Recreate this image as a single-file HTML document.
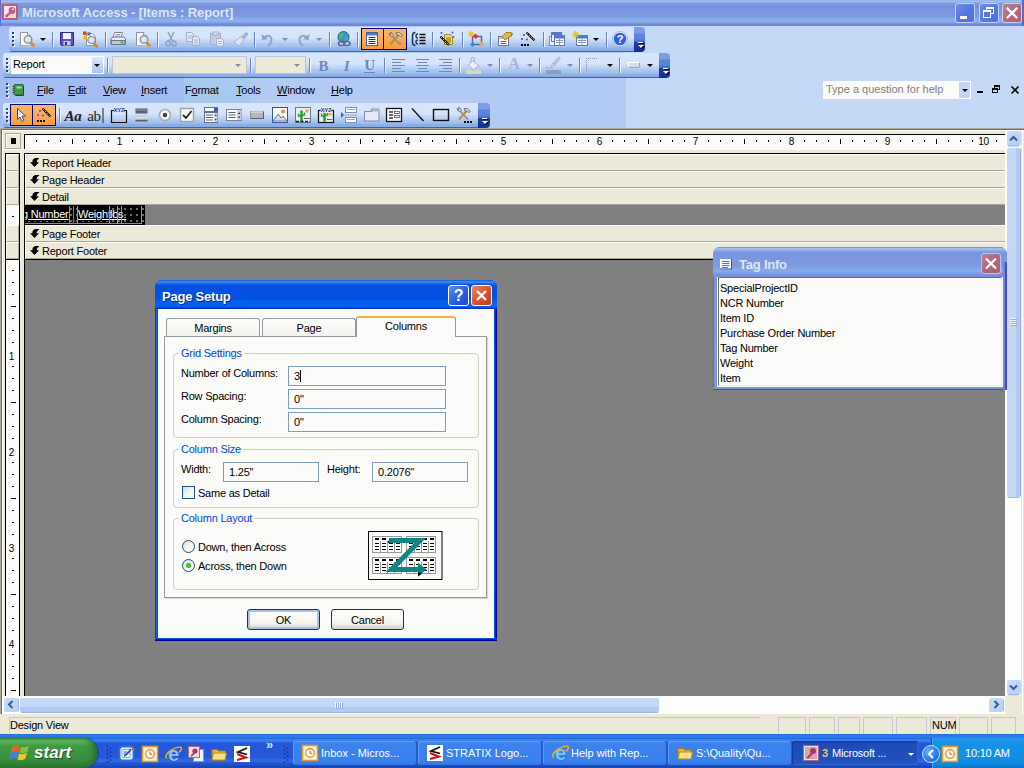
<!DOCTYPE html>
<html><head><meta charset="utf-8"><title>Microsoft Access - [Items : Report]</title>
<style>
*{box-sizing:border-box;margin:0;padding:0}
html,body{width:1024px;height:768px;overflow:hidden;background:#808080}
body{position:relative;font-family:"Liberation Sans",sans-serif;font-size:11px;color:#000;line-height:1;letter-spacing:-0.22px}
.a{position:absolute}
.t{position:absolute;white-space:nowrap;line-height:13px;height:13px}
svg{position:absolute;overflow:visible}
#title{left:0;top:0;width:1024px;height:26px;background:linear-gradient(#8caee8 0,#a4bef3 1.5px,#8daee8 2.5px,#7b9be3 3.5px,#7a98e1 5px,#7792dc 6.5px,#7792dc 8px,#7a98e1 9.5px,#7a98e1 15px,#7ba0e6 17px,#8cb0e9 19.5px,#8cb0e9 21.5px,#7b9ae2 23px,#7088d8 24.5px,#7088d8 26px)}
#title .cap{left:22px;top:4px;font:bold 13px "Liberation Sans",sans-serif;color:#dfe6f9;line-height:18px;height:18px;letter-spacing:-0.1px}
.wb{position:absolute;top:3px;width:20px;height:20px;border:1px solid #c4d2f4;border-radius:3px}
#dock{left:0;top:26px;width:1024px;height:102px;background:linear-gradient(90deg,#a3bcf2 0,#a3bcf2 184px,#a6c9ee 184px,#a6c9ee 250px,#b3cbf3 250px,#b3cbf3 626px,#c4d8f8 626px)}
.tb{position:absolute;height:25px;border-radius:3px 0 0 3px;background:linear-gradient(#d6e6fc 0,#d4e4fb 11px,#c4d8f6 13px,#c0d5f5 15px,#b4ccf2 16px,#a6c6ed 18px,#a0c2ec 20px,#8cb0e7 21px,#89ace5 23.500px,#3f62a0 24px,#3f62a0 25px)}
.cap2{position:absolute;width:11px;height:25px;border-radius:0 4px 4px 0;background:linear-gradient(#7a9ee4 0,#7a9ee4 6px,#5a84da 7px,#5a84da 12px,#4a74d0 13px,#4a74d0 14.500px,#1f40a0 15.500px,#12308c 25px)}
.sep{position:absolute;width:2px;height:15px;border-left:1px solid #6a7fcf;border-right:1px solid #f1f6fe}
.grip{position:absolute;width:2px;height:15px;margin:1px 0 0 1px;background:repeating-linear-gradient(#fff 0,#fff 2px,transparent 2px,transparent 4px)}
.grip::after{content:"";position:absolute;left:-1px;top:-1px;width:2px;height:15px;background:repeating-linear-gradient(#27408b 0,#27408b 2px,transparent 2px,transparent 4px)}
.act{position:absolute;height:22px;background:linear-gradient(#fbb865,#fdab57 50%,#f89b42);border:1px solid #000080}
.arr{position:absolute;width:0;height:0;border-left:3px solid transparent;border-right:3px solid transparent;border-top:3px solid #000}
.arr.g{border-top-color:#7c8eae}

.dlg{position:absolute;background:#fbfbf9}
.inp{position:absolute;height:20px;background:#fbfbf9;border:1px solid #7f9db9}
.inp .t{left:5px;top:3px}
.gb{position:absolute;border:1px solid #d0d0bf;border-radius:4px}
.gl{position:absolute;white-space:nowrap;line-height:13px;height:13px;color:#0046d5;background:#fbfbf9;padding:0 2px}
.btn{position:absolute;width:73px;height:21px;border:1px solid #003c74;border-radius:3px;background:linear-gradient(#fff,#f4f3ee 70%,#d6d0c5);text-align:center;line-height:21px}
.tab{position:absolute;height:18px;border:1px solid #919b9c;border-bottom:0;border-radius:3px 3px 0 0;background:linear-gradient(#fdfdfc,#f4f3ee);text-align:center;line-height:18px}
</style></head>
<body>
<div id="title" class="a"><div class="t cap">Microsoft Access - [Items : Report]</div></div>
<svg style="left:2px;top:4px" width="16" height="16"><rect x="1" y="1" width="14" height="14" fill="#f6e8ee" stroke="#b85c7c" stroke-width="2"/><path d="M2 14L14 7V14z" fill="#ecdcd0" opacity=".7"/><circle cx="10" cy="6.500" r="3.400" fill="#c4588a"/><circle cx="11" cy="5.200" r="1" fill="#f6e0ea"/><path d="M8 7.500L3 11.500l.8 2 2-.5.500-1.500 1.500-.3.700-1.500 1.500-.5z" fill="#c4588a"/></svg>
<div class="a" style="left:0;top:0;width:1px;height:26px;background:#5a6cd0"></div>
<div class="wb" style="left:955px;background:linear-gradient(135deg,#6f8fe6,#5578e0 50%,#5071dc)"><div class="a" style="left:4px;top:12px;width:7px;height:3px;background:#fff"></div></div>
<div class="wb" style="left:979px;background:linear-gradient(135deg,#6f8fe6,#5578e0 50%,#5071dc)"><div class="a" style="left:6px;top:3px;width:8px;height:7px;border:1px solid #fff;border-top-width:2px"></div><div class="a" style="left:3px;top:6px;width:8px;height:8px;border:1px solid #fff;border-top-width:2px;background:#5578e0"></div></div>
<div class="wb" style="left:1002px;background:linear-gradient(135deg,#c08090,#b46878 50%,#ac6274)"><svg style="left:0;top:0" width="18" height="18"><path d="M3.800 3.800L14.200 14.200M14.200 3.800L3.800 14.200" stroke="#fff" stroke-width="2.300" fill="none"/></svg></div>
<div class="a" style="left:1022px;top:0;width:2px;height:26px;background:#5a68c8"></div>
<div id="dock" class="a"></div>
<div class="tb" style="left:9px;top:27px;width:625px"></div><div class="cap2" style="left:634px;top:27px"></div>
<div class="grip" style="left:12px;top:32px"></div>
<div class="sep" style="left:52px;top:32px"></div>
<div class="sep" style="left:105px;top:32px"></div>
<div class="sep" style="left:157px;top:32px"></div>
<div class="sep" style="left:254px;top:32px"></div>
<div class="sep" style="left:329px;top:32px"></div>
<div class="sep" style="left:357px;top:32px"></div>
<div class="sep" style="left:432px;top:32px"></div>
<div class="sep" style="left:462px;top:32px"></div>
<div class="sep" style="left:490px;top:32px"></div>
<div class="sep" style="left:543px;top:32px"></div>
<div class="sep" style="left:606px;top:32px"></div>
<div class="act" style="left:361px;top:28px;width:23px"></div><div class="act" style="left:383px;top:28px;width:24px"></div>
<div class="arr" style="left:40px;top:38px"></div>
<div class="arr g" style="left:282px;top:38px"></div>
<div class="arr g" style="left:316px;top:38px"></div>
<div class="arr" style="left:593px;top:38px"></div>
<svg style="left:19px;top:31px" width="16" height="16"><path d="M1.500 1.500h7l3 3v10h-10z" fill="#fdfdfd" stroke="#8a92a6"/><path d="M8.500 1.500v3h3" fill="#e6eaf2" stroke="#8a92a6"/><path d="M2 15h10v-10" stroke="#c4cad8" fill="none"/><path d="M11.500 11.500l3 3" stroke="#e08a1e" stroke-width="2.800" stroke-linecap="round"/><circle cx="9" cy="8.500" r="3.800" fill="#dbe8f8" stroke="#8f98aa" stroke-width="1.500"/></svg><svg style="left:59px;top:31px" width="16" height="16"><path d="M1.500 1.500h13v13h-12l-1-1z" fill="#5a52c8" stroke="#2f2a8a"/><rect x="4" y="2" width="8" height="6" fill="#f4f4fb"/><rect x="4.500" y="10" width="7" height="4.500" fill="#c9cbe4"/><rect x="6" y="11" width="2" height="3" fill="#2f2a8a"/></svg><svg style="left:82px;top:31px" width="16" height="16"><path d="M4.500 2.500h6l3 3v9h-9z" fill="#fdfdfd" stroke="#8a92a6"/><rect x="1" y="0.500" width="3.500" height="3.500" fill="#e23a2a"/><rect x="5.500" y="1.500" width="3" height="3" fill="#2f6fe0"/><rect x="1.500" y="5" width="3.500" height="3.500" fill="#f2b21e"/><path d="M12 12.500l3 3" stroke="#e08a1e" stroke-width="2.600" stroke-linecap="round"/><circle cx="9.500" cy="9" r="3.600" fill="#dbe8f8" stroke="#8f98aa" stroke-width="1.500"/></svg><svg style="left:110px;top:31px" width="16" height="16"><path d="M4.500 1.500h8l-1.500 5h-8z" fill="#fff" stroke="#7d8696"/><path d="M5.500 3.500h5M5 5h5" stroke="#9aa2b4"/><path d="M1 7.500l2-1.500h11l1.500 1.500v5.500h-14.500z" fill="#e9ebf0" stroke="#6d7686"/><rect x="1.500" y="9.500" width="13.500" height="4" fill="#c2c7d2" stroke="#6d7686"/><rect x="10.500" y="10.500" width="3" height="2" fill="#2fc23a"/></svg><svg style="left:134.5px;top:31px" width="16" height="16"><path d="M1.500 1.500h7l3 3v10h-10z" fill="#fdfdfd" stroke="#8a92a6"/><path d="M8.500 1.500v3h3" fill="#e6eaf2" stroke="#8a92a6"/><path d="M2 15h10v-10" stroke="#c4cad8" fill="none"/><path d="M11.500 11.500l3 3" stroke="#e08a1e" stroke-width="2.800" stroke-linecap="round"/><circle cx="9" cy="8.500" r="3.800" fill="#dbe8f8" stroke="#8f98aa" stroke-width="1.500"/></svg><svg style="left:162.5px;top:31px" width="16" height="16"><path d="M5 1l4.500 9M11 1L6.500 10" stroke="#8fa3c6" stroke-width="1.500" fill="none"/><ellipse cx="5" cy="12.500" rx="2" ry="2.500" fill="none" stroke="#8fa3c6" stroke-width="1.500"/><ellipse cx="11" cy="12.500" rx="2" ry="2.500" fill="none" stroke="#8fa3c6" stroke-width="1.500"/></svg><svg style="left:185px;top:31px" width="16" height="16"><path d="M1.500 1.500h5l2 2v7h-7z" fill="#e6e9f1" stroke="#9fb0cf"/><path d="M3 5h4M3 7h4" stroke="#a9b5cd"/><path d="M7.500 5.500h5l2 2v7h-7z" fill="#e6e9f1" stroke="#9fb0cf"/><path d="M9 9h4M9 11h4M9 13h4" stroke="#a9b5cd"/></svg><svg style="left:208.5px;top:31px" width="16" height="16"><rect x="1.500" y="2.500" width="10" height="11" fill="#c7cde0" stroke="#9fb0cf"/><rect x="4" y="1" width="5" height="3" fill="#dfe3ee" stroke="#9fb0cf"/><path d="M7.500 7.500h5l2 2v5.500h-7z" fill="#eceef4" stroke="#9fb0cf"/><path d="M9 10.500h4M9 12.500h4" stroke="#a9b5cd"/></svg><svg style="left:233px;top:31px" width="16" height="16"><path d="M13.500 1.500l1.500 1.500-4.500 5-2-2z" fill="#a9b7d2" stroke="#93a5c6"/><path d="M8 5.500l3 3-5 6.500-5-3.500z" fill="#dfe4ef" stroke="#a4b3d0"/></svg><svg style="left:260px;top:31px" width="16" height="16"><path d="M3 7.500q5-5 8-1 2 4-3 8.500" stroke="#8fa3c6" stroke-width="2" fill="none"/><path d="M1.500 3l1 6.500 5.500-2z" fill="#8fa3c6"/></svg><svg style="left:294.5px;top:31px" width="16" height="16"><path d="M13 7.500q-5-5-8-1-2 4 3 8.500" stroke="#8fa3c6" stroke-width="2" fill="none"/><path d="M14.500 3l-1 6.500-5.500-2z" fill="#8fa3c6"/></svg><svg style="left:335.5px;top:31px" width="16" height="16"><circle cx="7.500" cy="6" r="5.500" fill="#3f8ee0" stroke="#2a5fa8"/><path d="M3.500 3.500q2-2.500 4-1.500 1 2-1 3.500t-1 3.500q-2-1-2.500-3z" fill="#4fc23f"/><path d="M9.500 5.500q2.500 0 2.500 2.500-1 2-2.500 1.500z" fill="#4fc23f"/><rect x="2.500" y="10.500" width="6" height="4" rx="2" fill="none" stroke="#59688a" stroke-width="1.600"/><rect x="8" y="10.500" width="6" height="4" rx="2" fill="none" stroke="#59688a" stroke-width="1.600"/></svg><svg style="left:364px;top:31px" width="16" height="16"><rect x="2.500" y="1.500" width="11" height="13" fill="#fff" stroke="#4a5f96"/><rect x="3" y="2" width="10" height="2.500" fill="#4a79d8"/><path d="M4.500 6.500h7M4.500 8.500h7M4.500 10.500h7M4.500 12.500h7" stroke="#333"/></svg><svg style="left:387px;top:31px" width="16" height="16"><path d="M3 13.500L12 3.500" stroke="#c78a2a" stroke-width="2"/><path d="M9 1.500q4-1 6.500 3l-2 1q-1.500-2-3.500-1.500z" fill="#d9dde6" stroke="#59606e" stroke-width=".8"/><path d="M13 13.500L5.500 5.500" stroke="#8a92a0" stroke-width="1.800"/><path d="M2 2.500q1 3 3 3.500l1.500-1.500q-.5-2-3-3.500l.5 2-1 1z" fill="#cfd4de" stroke="#59606e" stroke-width=".8"/><path d="M12 11.500l2 2" stroke="#c78a2a" stroke-width="2.400"/></svg><svg style="left:410.5px;top:31px" width="16" height="16"><path d="M4.500 1.500q-3 0-3 3v7q0 3 3 3" stroke="#22366e" stroke-width="1.600" fill="none"/><path d="M7 3q-2 0-2 2t2 2M7 9q-2 0-2 2t2 2" stroke="#22366e" stroke-width="1.400" fill="none"/><path d="M8.500 3.500h6M8.500 6.500h6M8.500 9.500h6M8.500 12.500h6" stroke="#111" stroke-width="1.400"/></svg><svg style="left:439px;top:31px" width="16" height="16"><path d="M5.500 3.500h6l2 2v8h-8z" fill="#f6d868" stroke="#a88a2a"/><path d="M7 7h5M7 9h5M7 11h5" stroke="#8a6f1e"/><path d="M1.500 5.500L10 14" stroke="#111" stroke-width="2.200"/><path d="M2 6l7.500 7.500" stroke="#e8c13a" stroke-width="1" stroke-dasharray="1.500 1.500"/><circle cx="2.500" cy="2" r="1" fill="#4a4ad0"/><circle cx="13.500" cy="1.500" r="1" fill="#4a4ad0"/><circle cx="14.500" cy="6" r=".9" fill="#4a4ad0"/></svg><svg style="left:468px;top:31px" width="16" height="16"><rect x="4.500" y="5.500" width="9" height="8" fill="none" stroke="#59688a" stroke-width="1.400"/><path d="M7 2.500l3.500 2.500-2.500 3-3-2.500z" fill="#e23a2a"/><path d="M4.500 11l2.500 2.500-2.500 2.500-2.500-2.500z" fill="#3f7fe0"/><path d="M13.500 10.500l2.500 2.500-2.500 2.500-2.500-2.500z" fill="#f2b21e"/><path d="M3 0v6M0 3h6M1 1l4 4M5 1L1 5" stroke="#f2c21e" stroke-width="1.100"/></svg><svg style="left:496.5px;top:31px" width="16" height="16"><rect x="1.500" y="5.500" width="10" height="9" fill="#fff" stroke="#6d7686"/><rect x="2" y="6" width="9" height="2" fill="#b9c4dc"/><path d="M3.500 10.500h6M3.500 12.500h6" stroke="#59606e"/><path d="M5 6l4-4.500 5 0 1 3-4 2.500-3 2z" fill="#e8b93a" stroke="#8a6a18" stroke-width=".8"/><path d="M14.500 1.500l1.500 1-1.500 3z" fill="#2f9a3a"/></svg><svg style="left:520px;top:31px" width="16" height="16"><path d="M6.500 1.500L14.500 9.500" stroke="#111" stroke-width="2.200"/><path d="M7 2l7.500 7.500" stroke="#e8c13a" stroke-width="1" stroke-dasharray="1.500 1.500"/><circle cx="4" cy="4" r="1" fill="#4a4ad0"/><circle cx="2" cy="8" r="1" fill="#4a4ad0"/><circle cx="7" cy="8.500" r="1" fill="#4a4ad0"/><rect x="1" y="13" width="2" height="2" fill="#000"/><rect x="4" y="13" width="2" height="2" fill="#000"/><rect x="7" y="13" width="2" height="2" fill="#000"/></svg><svg style="left:549px;top:31px" width="16" height="16"><rect x="0.500" y="5.500" width="9" height="9" fill="#eef1f8" stroke="#7d8cb0"/><rect x="2.500" y="1.500" width="10" height="9" fill="#eef1f8" stroke="#5f78b8"/><rect x="3" y="2" width="9" height="2" fill="#4a79d8"/><rect x="5.500" y="4.500" width="10" height="10" fill="#fff" stroke="#5f78b8"/><rect x="6" y="5" width="9" height="2.500" fill="#4a79d8"/><path d="M7 9.500h7M7 11.500h7M10.500 8v6" stroke="#8f9ab4"/></svg><svg style="left:572px;top:31px" width="16" height="16"><rect x="4.500" y="4.500" width="11" height="10" fill="#fff" stroke="#5f78b8"/><rect x="5" y="5" width="10" height="2.500" fill="#4a79d8"/><path d="M6 9.500h8M6 11.500h8M10 8v6" stroke="#8f9ab4"/><path d="M3.500 0v7M0 3.500h7M1 1l5 5M6 1L1 6" stroke="#f2c21e" stroke-width="1.200"/></svg><svg style="left:612px;top:31px" width="16" height="16"><circle cx="8" cy="8" r="7" fill="#2f63d8" stroke="#e6eefc" stroke-width="1.300"/><circle cx="8" cy="8" r="7.600" fill="none" stroke="#7f9fdf" stroke-width=".6"/><text x="8" y="12" text-anchor="middle" font-family="Liberation Sans,sans-serif" font-weight="bold" font-size="11" fill="#fff">?</text></svg>
<div class="tb" style="left:3px;top:53px;width:656px"></div><div class="cap2" style="left:659px;top:53px"></div>
<div class="grip" style="left:6px;top:58px"></div>
<div class="sep" style="left:107px;top:58px"></div>
<div class="sep" style="left:250px;top:58px"></div>
<div class="sep" style="left:309px;top:58px"></div>
<div class="sep" style="left:384px;top:58px"></div>
<div class="sep" style="left:459px;top:58px"></div>
<div class="sep" style="left:499px;top:58px"></div>
<div class="sep" style="left:539px;top:58px"></div>
<div class="sep" style="left:579px;top:58px"></div>
<div class="sep" style="left:619px;top:58px"></div>
<div class="a" style="left:11px;top:56px;width:93px;height:18px;background:#fbfbf9"><div class="t" style="left:2px;top:2px">Report</div><div class="a" style="left:81px;top:1px;width:11px;height:16px;background:linear-gradient(#dbe9fd,#a9c5f1)"></div><div class="arr" style="left:83px;top:8px"></div></div>
<div class="a" style="left:112px;top:56px;width:135px;height:18px;background:#ece9d8;border:1px solid #b8c6d8"><div class="arr g" style="left:122px;top:7px"></div></div>
<div class="a" style="left:255px;top:56px;width:51px;height:18px;background:#ece9d8;border:1px solid #b8c6d8"><div class="arr g" style="left:38px;top:7px"></div></div>
<div class="arr g" style="left:487px;top:64px"></div>
<div class="arr g" style="left:527px;top:64px"></div>
<div class="arr g" style="left:567px;top:64px"></div>
<div class="arr" style="left:607px;top:64px"></div>
<div class="arr" style="left:647px;top:64px"></div>
<svg style="left:315px;top:57px" width="17" height="17"><text x="8.5" y="14" text-anchor="middle" font-family="Liberation Serif,serif" font-size="15" fill="#6f86bd" font-weight="bold">B</text></svg><svg style="left:338px;top:57px" width="17" height="17"><text x="8.5" y="14" text-anchor="middle" font-family="Liberation Serif,serif" font-size="15" fill="#6f86bd" font-weight="bold" font-style="italic">I</text></svg><svg style="left:361px;top:57px" width="17" height="17"><text x="8.5" y="13" text-anchor="middle" font-family="Liberation Serif,serif" font-size="15" fill="#6f86bd" font-weight="bold">U</text><rect x="3" y="15" width="11" height="1" fill="#6f86bd"/></svg><svg style="left:391.5px;top:58px" width="13" height="14"><rect x="0" y="1" width="13" height="1" fill="#6f86bd"/><rect x="0" y="4" width="9" height="1" fill="#6f86bd"/><rect x="0" y="7" width="13" height="1" fill="#6f86bd"/><rect x="0" y="10" width="9" height="1" fill="#6f86bd"/><rect x="0" y="13" width="13" height="1" fill="#6f86bd"/></svg><svg style="left:415.5px;top:58px" width="13" height="14"><rect x="0" y="1" width="13" height="1" fill="#6f86bd"/><rect x="2" y="4" width="9" height="1" fill="#6f86bd"/><rect x="0" y="7" width="13" height="1" fill="#6f86bd"/><rect x="2" y="10" width="9" height="1" fill="#6f86bd"/><rect x="0" y="13" width="13" height="1" fill="#6f86bd"/></svg><svg style="left:438.5px;top:58px" width="13" height="14"><rect x="0" y="1" width="13" height="1" fill="#6f86bd"/><rect x="4" y="4" width="9" height="1" fill="#6f86bd"/><rect x="0" y="7" width="13" height="1" fill="#6f86bd"/><rect x="4" y="10" width="9" height="1" fill="#6f86bd"/><rect x="0" y="13" width="13" height="1" fill="#6f86bd"/></svg><svg style="left:466px;top:56px" width="17" height="19"><rect x="0" y="14" width="15" height="4" fill="#d6dcc4"/><path d="M6.500 4.500l6 5-5 4.500-5-5z" fill="#eef1f7" stroke="#9fb0cf"/><path d="M5 6.500v-4q2-2.500 3.500 0v3" fill="none" stroke="#9fb0cf"/><path d="M12.500 9.500q2 1 1.500 4-1.500-1-1.500-4z" fill="#b9c6df"/></svg><svg style="left:506px;top:56px" width="16" height="19"><text x="8" y="13" text-anchor="middle" font-family="Liberation Serif,serif" font-weight="bold" font-size="16" fill="#a3b4d6">A</text></svg><svg style="left:546px;top:56px" width="17" height="19"><rect x="0" y="14" width="15" height="4" fill="#8aa0bc"/><path d="M13 1l1.500 1.500-5 6-2-2z" fill="#b9c6df" stroke="#9fb0cf" stroke-width=".8"/><path d="M7 7l2 2q-2 3-6 3.500 2.500-2 4-5.500z" fill="#c9d3e6" stroke="#9fb0cf" stroke-width=".8"/><rect x="0" y="11" width="2" height="1" fill="#8fa3c6"/></svg><svg style="left:586px;top:58px" width="14" height="13"><path d="M0.500 13V0.500H12" stroke="#7d93c4" stroke-width="1" stroke-dasharray="1 1" fill="none"/></svg><svg style="left:628px;top:62px" width="12" height="6"><rect x="0.500" y="0.500" width="11" height="5" fill="#d9dbe0" stroke="#fff"/><path d="M0.500 5.500h11v-5" stroke="#9aa3b6" fill="none"/></svg>
<div class="grip" style="left:6px;top:83px"></div>
<svg style="left:12px;top:84px" width="12" height="12"><rect x="2" y="0.500" width="9.500" height="10.500" rx="1" fill="#3f9a45" stroke="#2a6a30"/><path d="M11.500 2v9.500h-8" stroke="#1f4a22" fill="none"/><rect x="4.500" y="2.500" width="5" height="2" fill="#a8dba8"/><path d="M0.500 2.500h2M0.500 4.500h2M0.500 6.500h2M0.500 8.500h2" stroke="#444"/></svg>
<div class="t" style="left:37px;top:84px"><u>F</u>ile</div>
<div class="t" style="left:68px;top:84px"><u>E</u>dit</div>
<div class="t" style="left:103px;top:84px"><u>V</u>iew</div>
<div class="t" style="left:141px;top:84px"><u>I</u>nsert</div>
<div class="t" style="left:185px;top:84px">F<u>o</u>rmat</div>
<div class="t" style="left:236px;top:84px"><u>T</u>ools</div>
<div class="t" style="left:277px;top:84px"><u>W</u>indow</div>
<div class="t" style="left:331px;top:84px"><u>H</u>elp</div>
<div class="a" style="left:823px;top:81px;width:148px;height:18px;background:#fbfbf9"><div class="t" style="left:3px;top:2px;color:#808080;letter-spacing:0">Type a question for help</div><div class="a" style="left:136px;top:1px;width:11px;height:16px;background:#c3d6f7"></div><div class="arr" style="left:139px;top:8px"></div></div>
<div class="a" style="left:977px;top:91px;width:6px;height:2px;background:#000"></div>
<div class="a" style="left:994px;top:85px;width:6px;height:5px;border:1px solid #000;border-top-width:2px"></div><div class="a" style="left:992px;top:88px;width:6px;height:5px;border:1px solid #000;border-top-width:2px;background:#c4d9f9"></div>
<svg style="left:1011px;top:86px" width="8" height="8"><path d="M0.5 0.5L7.5 7.5M7.5 0.5L0.5 7.5" stroke="#000" stroke-width="1.6"/></svg>
<div class="tb" style="left:3px;top:103px;width:475px"></div><div class="cap2" style="left:478px;top:103px;width:12px"></div>
<div class="grip" style="left:6px;top:108px"></div>
<div class="act" style="left:10px;top:104px;width:23px"></div><div class="act" style="left:32px;top:104px;width:24px"></div>
<div class="sep" style="left:59px;top:108px"></div>
<svg style="left:13px;top:107px" width="16" height="16"><path d="M4.500 1.500v11l2.500-2.500 2 4.500 2-1-2-4.500h3.500z" fill="#fff" stroke="#3a4a7a" stroke-width="1"/></svg><svg style="left:36px;top:107px" width="16" height="16"><path d="M6.500 1.500L14.500 9.500" stroke="#111" stroke-width="2.200"/><path d="M7 2l7.500 7.500" stroke="#e8c13a" stroke-width="1" stroke-dasharray="1.500 1.500"/><circle cx="4" cy="4" r="1" fill="#4a4ad0"/><circle cx="2" cy="8" r="1" fill="#4a4ad0"/><circle cx="7" cy="8.500" r="1" fill="#4a4ad0"/><rect x="1" y="13" width="2" height="2" fill="#000"/><rect x="4" y="13" width="2" height="2" fill="#000"/><rect x="7" y="13" width="2" height="2" fill="#000"/></svg><svg style="left:64px;top:107px" width="18" height="16"><text x="9" y="14" text-anchor="middle" font-family="Liberation Serif,serif" font-style="italic" font-weight="bold" font-size="15" fill="#222">Aa</text></svg><svg style="left:87px;top:107px" width="18" height="16"><text x="7" y="14" text-anchor="middle" font-family="Liberation Serif,serif" font-size="15" fill="#222">ab</text><rect x="15.500" y="1" width="1" height="15" fill="#222"/></svg><svg style="left:111px;top:107px" width="16" height="16"><path d="M3 3.500H0.500v12h15v-12H13" fill="none" stroke="#111" stroke-width="1.200"/><text x="8" y="5" text-anchor="middle" font-family="Liberation Sans,sans-serif" font-weight="bold" font-size="6" fill="#1f3c9a">XYZ</text></svg><svg style="left:134px;top:107px" width="16" height="16"><rect x="1.500" y="1.500" width="12" height="5" fill="#5a6170"/><rect x="1.500" y="2.500" width="12" height="1.500" fill="#7f8796"/><rect x="1.500" y="9.500" width="12" height="5" fill="#aab0bd"/><rect x="1.500" y="10" width="12" height="1.500" fill="#e6e9f0"/><rect x="1.500" y="13" width="12" height="1.500" fill="#5a6170"/></svg><svg style="left:157px;top:107px" width="16" height="16"><circle cx="8" cy="8" r="5.500" fill="#f6f7fa" stroke="#a7adba" stroke-width="1.600"/><circle cx="8" cy="8" r="2.200" fill="#3a4052"/></svg><svg style="left:179px;top:107px" width="16" height="16"><rect x="1.500" y="1.500" width="13" height="13" fill="#fbfbfb" stroke="#9aa1ae" stroke-width="1.400"/><path d="M4 8l3 3 5.500-7" stroke="#222" stroke-width="1.800" fill="none"/></svg><svg style="left:203px;top:107px" width="16" height="16"><rect x="1.500" y="0.500" width="13" height="4" fill="#fff" stroke="#5f6f95"/><rect x="11" y="1" width="3.500" height="3" fill="#3a5aa8"/><rect x="1.500" y="5.500" width="13" height="10" fill="#fff" stroke="#5f6f95"/><path d="M3 8h7M3 10.500h7M3 13h7" stroke="#59606e"/><rect x="11" y="6" width="3.500" height="9" fill="#c9d2e6"/><path d="M11.700 9l1 -1.500 1 1.500zM11.700 12l1 1.500 1-1.500z" fill="#222"/></svg><svg style="left:226px;top:107px" width="16" height="16"><rect x="0.500" y="2.500" width="15" height="11" fill="#fff" stroke="#7d8696"/><path d="M2.500 5.500h7M2.500 8h7M2.500 10.500h7" stroke="#59606e"/><rect x="11" y="3" width="4.500" height="10" fill="#c9d2e6"/><path d="M12 7l1.200-1.800 1.200 1.800zM12 9.500l1.200 1.800 1.200-1.800z" fill="#222"/></svg><svg style="left:249px;top:107px" width="16" height="16"><rect x="1.500" y="4.500" width="13" height="7" fill="#b3b6bd" stroke="#8a8e98"/><path d="M2 5h12" stroke="#e9ebef"/><path d="M2 11.500h12.500v-6.500" stroke="#5a5e68" fill="none"/></svg><svg style="left:272px;top:107px" width="16" height="16"><rect x="0.500" y="0.500" width="15" height="15" fill="#fff" stroke="#2f57a8"/><circle cx="11" cy="4.500" r="2" fill="#f08a2a"/><path d="M1 14l5-7 3 4 2-2 4 5z" fill="#cfd9ea" stroke="#4a5a7a" stroke-width=".8"/></svg><svg style="left:295px;top:107px" width="16" height="16"><rect x="0.500" y="0.500" width="15" height="15" fill="#e9edf5" stroke="#6d7686"/><path d="M6.500 14V4.500" stroke="#2a9436" stroke-width="2.400" stroke-linecap="round" fill="none"/><path d="M3.500 6.500v2.500h3M9.500 5.500v2.500h-3" stroke="#2a9436" stroke-width="1.300" fill="none"/><circle cx="12" cy="4" r="1.800" fill="#f2b21e"/><path d="M1 14.500h14" stroke="#222" stroke-width="1.500" stroke-dasharray="3 1.500"/><path d="M9 11.500h6" stroke="#59606e"/></svg><svg style="left:318px;top:107px" width="16" height="16"><rect x="0.500" y="3.500" width="15" height="12" fill="#e9edf5" stroke="#111" stroke-width="1.200"/><path d="M6.500 14V4.500" stroke="#2a9436" stroke-width="2.400" stroke-linecap="round" fill="none"/><path d="M3.500 6.500v2.500h3M9.500 5.500v2.500h-3" stroke="#2a9436" stroke-width="1.300" fill="none"/><circle cx="12" cy="7" r="1.800" fill="#f2b21e"/><text x="8" y="5" text-anchor="middle" font-family="Liberation Sans,sans-serif" font-weight="bold" font-size="6" fill="#1f3c9a" stroke="#eef2fb" stroke-width="1.500" paint-order="stroke">XYZ</text><path d="M9 12.500h5" stroke="#59606e"/></svg><svg style="left:341px;top:107px" width="16" height="16"><rect x="4.500" y="0.500" width="11" height="5" fill="#fff" stroke="#7d8cb0"/><path d="M6 2.500h8" stroke="#9aa8c8"/><rect x="4.500" y="10.500" width="11" height="5" fill="#fff" stroke="#7d8cb0"/><path d="M6 12.500h8" stroke="#9aa8c8"/><path d="M4 8h12" stroke="#7d8cb0" stroke-dasharray="1.500 1"/><path d="M0 5l3 3-3 3z" fill="#2f57d8"/></svg><svg style="left:364px;top:107px" width="16" height="16"><path d="M0.500 4.500h7v-2.500h7.500v12h-14.500z" fill="#e6ecf7" stroke="#7d8cb0"/><path d="M8 2.500h6.500v2h-6.500z" fill="#aab3c6"/></svg><svg style="left:386px;top:107px" width="16" height="16"><rect x="0.500" y="1.500" width="15" height="13" fill="#fff" stroke="#111" stroke-width="1.300"/><path d="M3 5h4M3 8h4M3 11h4" stroke="#333" stroke-width="1.300"/><rect x="8.500" y="4.500" width="5" height="2" fill="none" stroke="#555" stroke-width=".8"/><rect x="8.500" y="8.500" width="5" height="2" fill="none" stroke="#555" stroke-width=".8"/></svg><svg style="left:410px;top:107px" width="16" height="16"><path d="M2 1.500L13.500 14" stroke="#111" stroke-width="1.300"/></svg><svg style="left:433px;top:107px" width="16" height="16"><rect x="0.500" y="2.500" width="15" height="11" fill="none" stroke="#111" stroke-width="1.400"/></svg><svg style="left:456px;top:107px" width="16" height="16"><path d="M3 12.500L11 3.500" stroke="#c78a2a" stroke-width="2"/><path d="M8 1.500q4-1 6.500 3l-2 1q-1.500-2-3.500-1.500z" fill="#d9dde6" stroke="#59606e" stroke-width=".8"/><path d="M12 12.500L4.500 4.500" stroke="#8a92a0" stroke-width="1.800"/><path d="M1 1.500q1 3 3 3.500l1.500-1.500q-.5-2-3-3.500l.5 2-1 1z" fill="#cfd4de" stroke="#59606e" stroke-width=".8"/><rect x="8" y="14" width="2" height="2" fill="#000"/><rect x="11" y="14" width="2" height="2" fill="#000"/><rect x="14" y="14" width="2" height="2" fill="#000"/></svg>
<div class="a" style="left:638px;top:42px;width:5px;height:1px;background:#fff;box-shadow:1px 1px 0 #000"></div>
<div class="arr" style="left:638px;top:45px;border-top-color:#fff;filter:drop-shadow(1px 1px 0 #000)"></div>
<div class="a" style="left:663px;top:68px;width:5px;height:1px;background:#fff;box-shadow:1px 1px 0 #000"></div>
<div class="arr" style="left:663px;top:71px;border-top-color:#fff;filter:drop-shadow(1px 1px 0 #000)"></div>
<div class="a" style="left:482px;top:118px;width:5px;height:1px;background:#fff;box-shadow:1px 1px 0 #000"></div>
<div class="arr" style="left:482px;top:121px;border-top-color:#fff;filter:drop-shadow(1px 1px 0 #000)"></div>
<div class="a" style="left:0;top:128px;width:1024px;height:606px;background:#ece9d8"></div>
<div class="a" style="left:0;top:128px;width:1024px;height:1px;background:#aca899"></div>
<div class="a" style="left:0;top:129px;width:1024px;height:1px;background:#716f64"></div>
<div class="a" style="left:0;top:128px;width:1px;height:586px;background:#aca899"></div>
<div class="a" style="left:1px;top:129px;width:1px;height:585px;background:#716f64"></div>
<div class="a" style="left:2px;top:130px;width:1022px;height:1px;background:#fff"></div>
<div class="a" style="left:2px;top:130px;width:1px;height:584px;background:#fff"></div>
<div class="a" style="left:1022px;top:130px;width:1px;height:585px;background:#fff"></div>
<div class="a" style="left:24px;top:153px;width:981px;height:543px;background:#808080"></div>
<div class="a" style="left:5px;top:133px;width:16px;height:16px;border:1px solid #aca899;box-shadow:inset 1px 1px 0 #fff;background:#ece9d8"><div class="a" style="left:5px;top:4px;width:5px;height:6px;background:#000"></div></div>
<div class="a" style="left:5px;top:149px;width:1001px;height:1px;background:#fff"></div>
<div class="a" style="left:24px;top:134px;width:982px;height:15px;background:#fbfbf9;border-top:1px solid #000;border-left:1px solid #000"></div>
<svg style="left:0;top:0" width="1024" height="160" font-family="Liberation Sans,sans-serif" font-size="10" fill="#000"><rect x="36" y="140" width="1" height="2"/><rect x="48" y="140" width="1" height="2"/><rect x="60" y="140" width="1" height="2"/><rect x="72" y="139" width="1" height="5"/><rect x="84" y="140" width="1" height="2"/><rect x="96" y="140" width="1" height="2"/><rect x="108" y="140" width="1" height="2"/><text x="119.5" y="145" text-anchor="middle">1</text><rect x="132" y="140" width="1" height="2"/><rect x="144" y="140" width="1" height="2"/><rect x="156" y="140" width="1" height="2"/><rect x="168" y="139" width="1" height="5"/><rect x="180" y="140" width="1" height="2"/><rect x="192" y="140" width="1" height="2"/><rect x="204" y="140" width="1" height="2"/><text x="215.5" y="145" text-anchor="middle">2</text><rect x="228" y="140" width="1" height="2"/><rect x="240" y="140" width="1" height="2"/><rect x="252" y="140" width="1" height="2"/><rect x="264" y="139" width="1" height="5"/><rect x="276" y="140" width="1" height="2"/><rect x="288" y="140" width="1" height="2"/><rect x="300" y="140" width="1" height="2"/><text x="311.5" y="145" text-anchor="middle">3</text><rect x="324" y="140" width="1" height="2"/><rect x="336" y="140" width="1" height="2"/><rect x="348" y="140" width="1" height="2"/><rect x="360" y="139" width="1" height="5"/><rect x="372" y="140" width="1" height="2"/><rect x="384" y="140" width="1" height="2"/><rect x="396" y="140" width="1" height="2"/><text x="407.5" y="145" text-anchor="middle">4</text><rect x="420" y="140" width="1" height="2"/><rect x="432" y="140" width="1" height="2"/><rect x="444" y="140" width="1" height="2"/><rect x="456" y="139" width="1" height="5"/><rect x="468" y="140" width="1" height="2"/><rect x="480" y="140" width="1" height="2"/><rect x="492" y="140" width="1" height="2"/><text x="503.5" y="145" text-anchor="middle">5</text><rect x="516" y="140" width="1" height="2"/><rect x="528" y="140" width="1" height="2"/><rect x="540" y="140" width="1" height="2"/><rect x="552" y="139" width="1" height="5"/><rect x="564" y="140" width="1" height="2"/><rect x="576" y="140" width="1" height="2"/><rect x="588" y="140" width="1" height="2"/><text x="599.5" y="145" text-anchor="middle">6</text><rect x="612" y="140" width="1" height="2"/><rect x="624" y="140" width="1" height="2"/><rect x="636" y="140" width="1" height="2"/><rect x="648" y="139" width="1" height="5"/><rect x="660" y="140" width="1" height="2"/><rect x="672" y="140" width="1" height="2"/><rect x="684" y="140" width="1" height="2"/><text x="695.5" y="145" text-anchor="middle">7</text><rect x="708" y="140" width="1" height="2"/><rect x="720" y="140" width="1" height="2"/><rect x="732" y="140" width="1" height="2"/><rect x="744" y="139" width="1" height="5"/><rect x="756" y="140" width="1" height="2"/><rect x="768" y="140" width="1" height="2"/><rect x="780" y="140" width="1" height="2"/><text x="791.5" y="145" text-anchor="middle">8</text><rect x="804" y="140" width="1" height="2"/><rect x="816" y="140" width="1" height="2"/><rect x="828" y="140" width="1" height="2"/><rect x="840" y="139" width="1" height="5"/><rect x="852" y="140" width="1" height="2"/><rect x="864" y="140" width="1" height="2"/><rect x="876" y="140" width="1" height="2"/><text x="887.5" y="145" text-anchor="middle">9</text><rect x="900" y="140" width="1" height="2"/><rect x="912" y="140" width="1" height="2"/><rect x="924" y="140" width="1" height="2"/><rect x="936" y="139" width="1" height="5"/><rect x="948" y="140" width="1" height="2"/><rect x="960" y="140" width="1" height="2"/><rect x="972" y="140" width="1" height="2"/><text x="983.5" y="145" text-anchor="middle">10</text><rect x="996" y="140" width="1" height="2"/></svg>
<div class="a" style="left:5px;top:153px;width:15px;height:543px;background:#fbfbf9;border:1px solid #000;border-bottom:0"></div>
<div class="a" style="left:24px;top:153px;width:981px;height:1px;background:#000"></div>
<div class="a" style="left:24px;top:153px;width:1px;height:543px;background:#000"></div>
<div class="a" style="left:25px;top:154px;width:980px;height:17px;background:#ece9d8;border-top:1px solid #fff;border-left:1px solid #fff;border-bottom:1px solid #aca899"></div>
<div class="a" style="left:6px;top:154px;width:13px;height:17px;background:#ece9d8;border-top:1px solid #fff;border-left:1px solid #fff;border-bottom:1px solid #aca899;border-right:1px solid #aca899"></div>
<svg style="left:29px;top:157px" width="11" height="11"><path d="M10.500 1H6.500Q3.500 1.500 3.200 5.300H1L5.500 10 10 5.300H7.500Q7.500 3 10.500 1z" fill="#000"/></svg>
<div class="t" style="left:42px;top:157px">Report Header</div>
<div class="a" style="left:25px;top:171px;width:980px;height:17px;background:#ece9d8;border-top:1px solid #fff;border-left:1px solid #fff;border-bottom:1px solid #aca899"></div>
<div class="a" style="left:6px;top:171px;width:13px;height:17px;background:#ece9d8;border-top:1px solid #fff;border-left:1px solid #fff;border-bottom:1px solid #aca899;border-right:1px solid #aca899"></div>
<svg style="left:29px;top:174px" width="11" height="11"><path d="M10.500 1H6.500Q3.500 1.500 3.200 5.300H1L5.500 10 10 5.300H7.500Q7.500 3 10.500 1z" fill="#000"/></svg>
<div class="t" style="left:42px;top:174px">Page Header</div>
<div class="a" style="left:25px;top:188px;width:980px;height:17px;background:#ece9d8;border-top:1px solid #fff;border-left:1px solid #fff;border-bottom:1px solid #aca899"></div>
<div class="a" style="left:6px;top:188px;width:13px;height:17px;background:#ece9d8;border-top:1px solid #fff;border-left:1px solid #fff;border-bottom:1px solid #aca899;border-right:1px solid #aca899"></div>
<svg style="left:29px;top:191px" width="11" height="11"><path d="M10.500 1H6.500Q3.500 1.500 3.200 5.300H1L5.500 10 10 5.300H7.500Q7.500 3 10.500 1z" fill="#000"/></svg>
<div class="t" style="left:42px;top:191px">Detail</div>
<div class="a" style="left:25px;top:225px;width:980px;height:17px;background:#ece9d8;border-top:1px solid #fff;border-left:1px solid #fff;border-bottom:1px solid #aca899"></div>
<div class="a" style="left:6px;top:225px;width:13px;height:17px;background:#ece9d8;border-top:1px solid #fff;border-left:1px solid #fff;border-bottom:1px solid #aca899;border-right:1px solid #aca899"></div>
<svg style="left:29px;top:228px" width="11" height="11"><path d="M10.500 1H6.500Q3.500 1.500 3.200 5.300H1L5.500 10 10 5.300H7.500Q7.500 3 10.500 1z" fill="#000"/></svg>
<div class="t" style="left:42px;top:228px">Page Footer</div>
<div class="a" style="left:25px;top:242px;width:980px;height:17px;background:#ece9d8;border-top:1px solid #fff;border-left:1px solid #fff;border-bottom:1px solid #aca899"></div>
<div class="a" style="left:6px;top:242px;width:13px;height:17px;background:#ece9d8;border-top:1px solid #fff;border-left:1px solid #fff;border-bottom:1px solid #aca899;border-right:1px solid #aca899"></div>
<svg style="left:29px;top:245px" width="11" height="11"><path d="M10.500 1H6.500Q3.500 1.500 3.200 5.300H1L5.500 10 10 5.300H7.500Q7.500 3 10.500 1z" fill="#000"/></svg>
<div class="t" style="left:42px;top:245px">Report Footer</div>
<div class="a" style="left:24px;top:205px;width:981px;height:1px;background:#000"></div>
<div class="a" style="left:24px;top:259px;width:981px;height:1px;background:#000"></div>
<div class="a" style="left:5px;top:259px;width:15px;height:1px;background:#000"></div>
<div class="a" style="left:25px;top:205px;width:980px;height:20px;background:#808080"></div>
<div class="a" style="left:25px;top:205px;width:120px;height:20px;background:#000;overflow:hidden"><div class="a" style="left:0;top:0;width:120px;height:20px;background-image:radial-gradient(circle,#e8e8e8 0.600px,transparent 0.850px);background-size:6px 6px;background-position:1px 1px;opacity:.8"></div><div class="t" style="left:-3px;top:3px;color:#fff;text-decoration:underline;background:#000">g Number</div><div class="t" style="left:47px;top:6px;color:#fff">,</div><div class="t" style="left:53px;top:3px;color:#fff;text-decoration:underline;background:#000">Weight</div><div class="t" style="left:85px;top:3px;color:#fff;text-decoration:underline">lbs.</div><div class="a" style="left:0;top:18px;width:116px;height:1px;background:#8a8a8a"></div><div class="a" style="left:44px;top:1px;width:1px;height:18px;background:#9a9a9a"></div><div class="a" style="left:48px;top:1px;width:1px;height:18px;background:#777"></div><div class="a" style="left:52px;top:1px;width:1px;height:18px;background:#9a9a9a"></div><div class="a" style="left:84px;top:1px;width:1px;height:18px;background:#9a9a9a"></div><div class="a" style="left:92px;top:1px;width:1px;height:18px;background:#9a9a9a"></div><div class="a" style="left:96px;top:1px;width:1px;height:18px;background:#9a9a9a"></div><div class="a" style="left:116px;top:1px;width:1px;height:18px;background:#9a9a9a"></div></div>
<svg style="left:0;top:0" width="24" height="700" font-family="Liberation Sans,sans-serif" font-size="10" fill="#000"><rect x="12" y="216" width="2" height="1"/><rect x="12" y="270" width="2" height="1"/><rect x="12" y="282" width="2" height="1"/><rect x="12" y="294" width="2" height="1"/><rect x="11" y="306" width="5" height="1"/><rect x="12" y="318" width="2" height="1"/><rect x="12" y="330" width="2" height="1"/><rect x="12" y="342" width="2" height="1"/><text x="11.5" y="360" text-anchor="middle">1</text><rect x="12" y="366" width="2" height="1"/><rect x="12" y="378" width="2" height="1"/><rect x="12" y="390" width="2" height="1"/><rect x="11" y="402" width="5" height="1"/><rect x="12" y="414" width="2" height="1"/><rect x="12" y="426" width="2" height="1"/><rect x="12" y="438" width="2" height="1"/><text x="11.5" y="456" text-anchor="middle">2</text><rect x="12" y="462" width="2" height="1"/><rect x="12" y="474" width="2" height="1"/><rect x="12" y="486" width="2" height="1"/><rect x="11" y="498" width="5" height="1"/><rect x="12" y="510" width="2" height="1"/><rect x="12" y="522" width="2" height="1"/><rect x="12" y="534" width="2" height="1"/><text x="11.5" y="552" text-anchor="middle">3</text><rect x="12" y="558" width="2" height="1"/><rect x="12" y="570" width="2" height="1"/><rect x="12" y="582" width="2" height="1"/><rect x="11" y="594" width="5" height="1"/><rect x="12" y="606" width="2" height="1"/><rect x="12" y="618" width="2" height="1"/><rect x="12" y="630" width="2" height="1"/><text x="11.5" y="648" text-anchor="middle">4</text><rect x="12" y="654" width="2" height="1"/><rect x="12" y="666" width="2" height="1"/><rect x="12" y="678" width="2" height="1"/><rect x="11" y="690" width="5" height="1"/></svg>
<div class="a" style="left:1005px;top:131px;width:17px;height:565px;background:#fdfdfb"></div>
<div class="a" style="left:1021px;top:131px;width:1px;height:565px;background:#e4e6ea"></div>
<div class="a" style="left:1007px;top:131px;width:13px;height:14px;background:linear-gradient(135deg,#c9dcf9,#b8cff5);border-radius:2px;box-shadow:0 2px 0 -0.500px #9db9eb,1.500px 0 0 #c9dbf8"><svg style="left:2px;top:4px" width="9" height="7"><path d="M1 5.500L4.500 2 8 5.500" stroke="#3b5a8a" stroke-width="2" fill="none"/></svg></div>
<div class="a" style="left:1007px;top:148px;width:13px;height:349px;background:linear-gradient(90deg,#c4d8f8 0,#c4d8f8 9px,#b0caf5 9px);border-radius:2px;box-shadow:1.500px 0 0 -0.500px #9db0d8,0 1.500px 0 -0.500px #9db9eb"></div>
<div class="a" style="left:1010px;top:318px;width:6px;height:1px;background:#f4f8fe;box-shadow:1px 1px 0 #8caae0"></div>
<div class="a" style="left:1010px;top:320px;width:6px;height:1px;background:#f4f8fe;box-shadow:1px 1px 0 #8caae0"></div>
<div class="a" style="left:1010px;top:322px;width:6px;height:1px;background:#f4f8fe;box-shadow:1px 1px 0 #8caae0"></div>
<div class="a" style="left:1010px;top:324px;width:6px;height:1px;background:#f4f8fe;box-shadow:1px 1px 0 #8caae0"></div>
<div class="a" style="left:1007px;top:680px;width:13px;height:14px;background:linear-gradient(135deg,#c9dcf9,#b8cff5);border-radius:2px;box-shadow:0 2px 0 -0.500px #9db9eb,1.500px 0 0 #c9dbf8"><svg style="left:2px;top:4px" width="9" height="7"><path d="M1 1.500L4.500 5 8 1.500" stroke="#3b5a8a" stroke-width="2" fill="none"/></svg></div>
<div class="a" style="left:3px;top:696px;width:1002px;height:18px;background:#fdfdfb"></div>
<div class="a" style="left:3px;top:714px;width:1019px;height:1px;background:#fff"></div>
<div class="a" style="left:4px;top:698px;width:14px;height:14px;background:linear-gradient(135deg,#c9dcf9,#b8cff5);border-radius:2px;box-shadow:1.500px 0 0 -0.500px #9db9eb"><svg style="left:3px;top:2px" width="7" height="9"><path d="M5.500 1L2 4.500 5.500 8" stroke="#3b5a8a" stroke-width="2" fill="none"/></svg></div>
<div class="a" style="left:20px;top:698px;width:639px;height:14px;background:linear-gradient(#c4d8f8 0,#c4d8f8 9px,#b0caf5 9px);border-radius:2px;box-shadow:0 1.500px 0 -0.500px #9db0d8"></div>
<div class="a" style="left:335px;top:702px;width:1px;height:6px;background:#f4f8fe;box-shadow:1px 1px 0 #8caae0"></div>
<div class="a" style="left:337px;top:702px;width:1px;height:6px;background:#f4f8fe;box-shadow:1px 1px 0 #8caae0"></div>
<div class="a" style="left:339px;top:702px;width:1px;height:6px;background:#f4f8fe;box-shadow:1px 1px 0 #8caae0"></div>
<div class="a" style="left:341px;top:702px;width:1px;height:6px;background:#f4f8fe;box-shadow:1px 1px 0 #8caae0"></div>
<div class="a" style="left:989px;top:698px;width:14px;height:14px;background:linear-gradient(135deg,#c9dcf9,#b8cff5);border-radius:2px;box-shadow:1.500px 0 0 -0.500px #9db9eb"><svg style="left:4px;top:2px" width="7" height="9"><path d="M1.500 1L5 4.500 1.500 8" stroke="#3b5a8a" stroke-width="2" fill="none"/></svg></div>
<div class="a" style="left:155px;top:280px;width:342px;height:361px;border-radius:7px 7px 0 0;background:#0a30d0"></div>
<div class="a" style="left:155px;top:280px;width:342px;height:29px;border-radius:7px 7px 0 0;background:linear-gradient(#0a5ce0 0,#3c80e8 1.500px,#3c80e8 2.500px,#0a5ee6 4px,#0450e0 6px,#0450e0 19px,#0560f0 21px,#0560f0 26.500px,#0a48d8 27.500px,#0a32c8 28.500px)"></div>
<div class="a" style="left:155px;top:309px;width:3px;height:332px;background:linear-gradient(90deg,#0a30d0 0,#0a30d0 1px,#1a68d8 1px,#1a68d8 2px,#0a48e0 2px)"></div>
<div class="a" style="left:494px;top:309px;width:3px;height:332px;background:linear-gradient(90deg,#0a50e0 0,#0a50e0 1px,#0a20b0 1px,#0a20b0 2px,#00008a 2px)"></div>
<div class="a" style="left:155px;top:638px;width:342px;height:3px;background:linear-gradient(#0a50e0 0,#0a50e0 1px,#0a20a8 1px,#0a20a8 2px,#00008a 2px)"></div>
<div class="t" style="left:162px;top:289px;font:bold 13px 'Liberation Sans',sans-serif;color:#fff;line-height:16px;height:16px;text-shadow:1px 1px 0 #0a246a">Page Setup</div>
<div class="a" style="left:448px;top:285px;width:21px;height:21px;border:1px solid #fff;border-radius:3px;background:linear-gradient(135deg,#5c8ef5,#2a5fe0 55%,#1d49c9)"><div class="t" style="left:0;top:1px;width:19px;text-align:center;font:bold 16px 'Liberation Sans',sans-serif;color:#fff;line-height:17px;height:17px">?</div></div>
<div class="a" style="left:471px;top:285px;width:21px;height:21px;border:1px solid #fff;border-radius:3px;background:linear-gradient(135deg,#ea8a68,#d9502b 55%,#c03c1c)"><svg style="left:0;top:0" width="19" height="19"><path d="M5 5L14 14M14 5L5 14" stroke="#fff" stroke-width="2.4" fill="none"/></svg></div>
<div class="dlg" style="left:158px;top:309px;width:336px;height:329px;border:1px solid #fff;border-top:0"></div>
<div class="a" style="left:164px;top:336px;width:323px;height:262px;background:#fbfbf9;border:1px solid #919b9c;box-shadow:1px 1px 0 #d8d6cb"></div>
<div class="tab" style="left:166px;top:318px;width:94px">Margins</div>
<div class="tab" style="left:262px;top:318px;width:94px">Page</div>
<div class="tab" style="left:356px;top:316px;width:100px;height:21px;background:#fbfbf9;border-top:2px solid #f9b233;line-height:17px">Columns</div>
<div class="gb" style="left:173px;top:353px;width:306px;height:85px"></div><div class="gl" style="left:179px;top:347px">Grid Settings</div>
<div class="gb" style="left:173px;top:449px;width:306px;height:59px"></div><div class="gl" style="left:179px;top:443px">Column Size</div>
<div class="gb" style="left:173px;top:518px;width:306px;height:72px"></div><div class="gl" style="left:179px;top:512px">Column Layout</div>
<div class="t" style="left:181px;top:367px">Number of Columns:</div>
<div class="inp" style="left:288px;top:366px;width:158px"><div class="t">3</div></div>
<div class="t" style="left:181px;top:390px">Row Spacing:</div>
<div class="inp" style="left:288px;top:389px;width:158px"><div class="t">0"</div></div>
<div class="t" style="left:181px;top:413px">Column Spacing:</div>
<div class="inp" style="left:288px;top:412px;width:158px"><div class="t">0"</div></div>
<div class="a" style="left:300px;top:370px;width:1px;height:12px;background:#000"></div>
<div class="t" style="left:181px;top:463px">Width:</div><div class="inp" style="left:223px;top:462px;width:96px"><div class="t">1.25"</div></div>
<div class="t" style="left:327px;top:463px">Height:</div><div class="inp" style="left:372px;top:462px;width:96px"><div class="t">0.2076"</div></div>
<div class="a" style="left:182px;top:486px;width:13px;height:13px;border:1px solid #1c5180;background:linear-gradient(135deg,#dcdcd7,#f3f3ef 50%,#fff)"></div><div class="t" style="left:198px;top:487px">Same as Detail</div>
<div class="a" style="left:182px;top:540px;width:13px;height:13px;border:1px solid #1c5180;border-radius:50%;background:linear-gradient(135deg,#dcdcd7,#f3f3ef 50%,#fff)"></div><div class="t" style="left:198px;top:541px">Down, then Across</div>
<div class="a" style="left:182px;top:559px;width:13px;height:13px;border:1px solid #1c5180;border-radius:50%;background:linear-gradient(135deg,#dcdcd7,#f3f3ef 50%,#fff)"><div class="a" style="left:3px;top:3px;width:5px;height:5px;border-radius:50%;background:radial-gradient(#4fd14a,#21a121)"></div></div><div class="t" style="left:198px;top:560px">Across, then Down</div>
<svg style="left:368px;top:531px" width="75" height="49"><rect x="0.5" y="0.5" width="73.500" height="48" fill="#fbfbf9" stroke="#000"/><rect x="4.5" y="5.5" width="29" height="16" fill="#fff" stroke="#9a9a9a" stroke-width="1"/><rect x="7" y="7" width="4" height="2" fill="#000"/><rect x="7" y="12" width="4" height="1" fill="#000"/><rect x="7" y="15" width="4" height="1" fill="#000"/><rect x="7" y="18" width="4" height="1" fill="#000"/><rect x="14" y="7" width="4" height="2" fill="#000"/><rect x="14" y="12" width="4" height="1" fill="#000"/><rect x="14" y="15" width="4" height="1" fill="#000"/><rect x="14" y="18" width="4" height="1" fill="#000"/><rect x="12" y="10" width="1" height="11" fill="#9a9a9a"/><rect x="21" y="7" width="4" height="2" fill="#000"/><rect x="21" y="12" width="4" height="1" fill="#000"/><rect x="21" y="15" width="4" height="1" fill="#000"/><rect x="21" y="18" width="4" height="1" fill="#000"/><rect x="19" y="10" width="1" height="11" fill="#9a9a9a"/><rect x="28" y="7" width="4" height="2" fill="#000"/><rect x="28" y="12" width="4" height="1" fill="#000"/><rect x="28" y="15" width="4" height="1" fill="#000"/><rect x="28" y="18" width="4" height="1" fill="#000"/><rect x="26" y="10" width="1" height="11" fill="#9a9a9a"/><rect x="38.5" y="5.5" width="29" height="16" fill="#fff" stroke="#9a9a9a" stroke-width="1"/><rect x="41" y="7" width="4" height="2" fill="#000"/><rect x="41" y="12" width="4" height="1" fill="#000"/><rect x="41" y="15" width="4" height="1" fill="#000"/><rect x="41" y="18" width="4" height="1" fill="#000"/><rect x="48" y="7" width="4" height="2" fill="#000"/><rect x="48" y="12" width="4" height="1" fill="#000"/><rect x="48" y="15" width="4" height="1" fill="#000"/><rect x="48" y="18" width="4" height="1" fill="#000"/><rect x="46" y="10" width="1" height="11" fill="#9a9a9a"/><rect x="55" y="7" width="4" height="2" fill="#000"/><rect x="55" y="12" width="4" height="1" fill="#000"/><rect x="55" y="15" width="4" height="1" fill="#000"/><rect x="55" y="18" width="4" height="1" fill="#000"/><rect x="53" y="10" width="1" height="11" fill="#9a9a9a"/><rect x="62" y="7" width="4" height="2" fill="#000"/><rect x="62" y="12" width="4" height="1" fill="#000"/><rect x="62" y="15" width="4" height="1" fill="#000"/><rect x="62" y="18" width="4" height="1" fill="#000"/><rect x="60" y="10" width="1" height="11" fill="#9a9a9a"/><rect x="4.5" y="26.5" width="29" height="16" fill="#fff" stroke="#9a9a9a" stroke-width="1"/><rect x="7" y="28" width="4" height="2" fill="#000"/><rect x="7" y="33" width="4" height="1" fill="#000"/><rect x="7" y="36" width="4" height="1" fill="#000"/><rect x="7" y="39" width="4" height="1" fill="#000"/><rect x="14" y="28" width="4" height="2" fill="#000"/><rect x="14" y="33" width="4" height="1" fill="#000"/><rect x="14" y="36" width="4" height="1" fill="#000"/><rect x="14" y="39" width="4" height="1" fill="#000"/><rect x="12" y="31" width="1" height="11" fill="#9a9a9a"/><rect x="21" y="28" width="4" height="2" fill="#000"/><rect x="21" y="33" width="4" height="1" fill="#000"/><rect x="21" y="36" width="4" height="1" fill="#000"/><rect x="21" y="39" width="4" height="1" fill="#000"/><rect x="19" y="31" width="1" height="11" fill="#9a9a9a"/><rect x="28" y="28" width="4" height="2" fill="#000"/><rect x="28" y="33" width="4" height="1" fill="#000"/><rect x="28" y="36" width="4" height="1" fill="#000"/><rect x="28" y="39" width="4" height="1" fill="#000"/><rect x="26" y="31" width="1" height="11" fill="#9a9a9a"/><rect x="38.5" y="26.5" width="29" height="16" fill="#fff" stroke="#9a9a9a" stroke-width="1"/><rect x="41" y="28" width="4" height="2" fill="#000"/><rect x="41" y="33" width="4" height="1" fill="#000"/><rect x="41" y="36" width="4" height="1" fill="#000"/><rect x="41" y="39" width="4" height="1" fill="#000"/><rect x="48" y="28" width="4" height="2" fill="#000"/><rect x="48" y="33" width="4" height="1" fill="#000"/><rect x="48" y="36" width="4" height="1" fill="#000"/><rect x="48" y="39" width="4" height="1" fill="#000"/><rect x="46" y="31" width="1" height="11" fill="#9a9a9a"/><rect x="55" y="28" width="4" height="2" fill="#000"/><rect x="55" y="33" width="4" height="1" fill="#000"/><rect x="55" y="36" width="4" height="1" fill="#000"/><rect x="55" y="39" width="4" height="1" fill="#000"/><rect x="53" y="31" width="1" height="11" fill="#9a9a9a"/><rect x="62" y="28" width="4" height="2" fill="#000"/><rect x="62" y="33" width="4" height="1" fill="#000"/><rect x="62" y="36" width="4" height="1" fill="#000"/><rect x="62" y="39" width="4" height="1" fill="#000"/><rect x="60" y="31" width="1" height="11" fill="#9a9a9a"/><path d="M20 12h5v-2h-5z" fill="#000"/><path d="M21 9.500H52L23.500 38.500H51" stroke="#0f8686" stroke-width="5" stroke-linejoin="miter" fill="none"/><path d="M50 31.500l8.500 7-8.500 7z" fill="#0f8686"/><path d="M50 41v4.500l4-3z" fill="#000"/></svg>
<div class="btn" style="left:247px;top:609px;box-shadow:inset 0 0 0 2px #a9c1f0">OK</div>
<div class="btn" style="left:331px;top:609px">Cancel</div>
<div class="a" style="left:713px;top:247px;width:294px;height:143px;border-radius:7px 7px 0 0;background:#7a96de"></div>
<div class="a" style="left:713px;top:262px;width:1px;height:128px;background:#4a6ad4"></div>
<div class="a" style="left:713px;top:247px;width:294px;height:30px;border-radius:7px 7px 0 0;background:linear-gradient(#6a7cdc 0,#a0baf0 1.500px,#a0baf0 2.500px,#84a4e6 4px,#7a96de 6px,#7b98e0 18px,#7ca0e6 20px,#86aae8 23px,#86aae8 24px,#7ca0e6 26px,#7690de 28px,#7690de 30px)"></div>
<div class="a" style="left:713px;top:387px;width:294px;height:3px;background:linear-gradient(#7a96de 0,#7a96de 2px,#4a4ac0 2px)"></div>
<div class="a" style="left:1003px;top:262px;width:4px;height:128px;background:linear-gradient(90deg,#7088dc 0,#6f86d8 2px,#4848c0 2px)"></div>
<svg style="left:720px;top:257px" width="12" height="13"><rect x="0" y="0" width="12" height="12.500" fill="#f4f7fd"/><rect x="0" y="0" width="12" height="2" fill="#6f9be8"/><path d="M11.500 2v10.500M0 12h12" stroke="#3f5490" fill="none"/><path d="M2 4.500h7.500M2 6.500h7.500M2 8.500h7.500M2 10.500h6" stroke="#66779c"/></svg>
<div class="t" style="left:739px;top:256px;font:bold 13px 'Liberation Sans',sans-serif;color:#dfe6f9;line-height:18px;height:18px">Tag Info</div>
<div class="a" style="left:981px;top:253px;width:20px;height:21px;border:1px solid #b4c6f0;border-radius:3px;background:linear-gradient(135deg,#bc8094,#b06878 50%,#aa6274)"><svg style="left:0;top:0" width="18" height="19"><path d="M4 4.500L14 14.500M14 4.500L4 14.500" stroke="#fff" stroke-width="2.200" fill="none"/></svg></div>
<div class="a" style="left:717px;top:277px;width:286px;height:110px;background:#fff"><div class="a" style="left:1px;top:0;width:284px;height:109px;background:#fbfbf9;border:1px solid #ece9d8;border-top-color:#6f6d60;border-left-color:#6f6d60"></div></div>
<div class="t" style="left:720px;top:282px">SpecialProjectID</div>
<div class="t" style="left:720px;top:297px">NCR Number</div>
<div class="t" style="left:720px;top:312px">Item ID</div>
<div class="t" style="left:720px;top:327px">Purchase Order Number</div>
<div class="t" style="left:720px;top:342px">Tag Number</div>
<div class="t" style="left:720px;top:357px">Weight</div>
<div class="t" style="left:720px;top:372px">Item</div>
<div class="a" style="left:0;top:714px;width:1024px;height:20px;background:#ece9d8"></div>
<div class="a" style="left:9px;top:717px;width:751px;height:17px;border-left:1px solid #c8c7cf;border-top:1px solid #c8c7cf"></div>
<div class="a" style="left:778px;top:717px;width:28px;height:17px;border:1px solid #c8c7cf;border-bottom:0"></div>
<div class="a" style="left:809px;top:717px;width:26px;height:17px;border:1px solid #c8c7cf;border-bottom:0"></div>
<div class="a" style="left:838px;top:717px;width:22px;height:17px;border:1px solid #c8c7cf;border-bottom:0"></div>
<div class="a" style="left:863px;top:717px;width:30px;height:17px;border:1px solid #c8c7cf;border-bottom:0"></div>
<div class="a" style="left:896px;top:717px;width:31px;height:17px;border:1px solid #c8c7cf;border-bottom:0"></div>
<div class="a" style="left:930px;top:717px;width:26px;height:17px;border:1px solid #c8c7cf;border-bottom:0"></div>
<div class="a" style="left:959px;top:717px;width:29px;height:17px;border:1px solid #c8c7cf;border-bottom:0"></div>
<div class="a" style="left:991px;top:717px;width:25px;height:17px;border:1px solid #c8c7cf;border-bottom:0"></div>
<div class="t" style="left:10px;top:719px">Design View</div>
<div class="t" style="left:932px;top:719px">NUM</div>
<div class="a" style="left:0;top:734px;width:1024px;height:34px;background:linear-gradient(#2a62c8 0,#2f78ea 1px,#2f78ea 3.500px,#2468e0 4.500px,#3a80ee 5.500px,#3a80ee 7px,#2e6ee4 8px,#2458d8 9.500px,#2458d8 24px,#2e68dc 25px,#2e68dc 28px,#2050d8 29px,#2050d8 31px,#1a48b0 32px,#1a48b0 34px)"></div>
<div class="a" style="left:0;top:738px;width:97px;height:30px;border-radius:0 14px 14px 0;background:linear-gradient(#3b8d3b 0,#5bb55b 3px,#3f9a41 8px,#3a9140 20px,#2f7f34 27px,#2a7030 30px);box-shadow:inset -6px 0 6px -3px #2a6a2c,1px 0 2px #163f7a"></div>
<div class="t" style="left:34px;top:742px;font:italic bold 17px 'Liberation Sans',sans-serif;letter-spacing:0.1px;color:#fff;line-height:22px;height:22px;text-shadow:1px 1px 1px #1e5220">start</div>
<svg style="left:10px;top:743px" width="20" height="18"><path d="M2 4q4-3 8-1l-1.500 6q-4-2-8 1z" fill="#e8632a"/><path d="M11 3.500q4 2 8-1l-1.500 6q-4 3-8 1z" fill="#7fc241"/><path d="M0.5 10.500q4-3 8-1l-1.500 6q-4-2-8 1z" fill="#4a7fe0"/><path d="M9 10.500q4 2 8-1l-1.500 6q-4 3-8 1z" fill="#f6c32c"/></svg>
<div class="a" style="left:106px;top:744px;width:3px;height:20px;background:radial-gradient(circle,#14359a 0.900px,transparent 1.200px);background-size:3px 4px;opacity:.85"></div>
<div class="a" style="left:109px;top:746px;width:3px;height:16px;background:radial-gradient(circle,#14359a 0.900px,transparent 1.200px);background-size:3px 4px;opacity:.85"></div>
<div class="a" style="left:283px;top:744px;width:3px;height:20px;background:radial-gradient(circle,#14359a 0.900px,transparent 1.200px);background-size:3px 4px;opacity:.85"></div>
<div class="a" style="left:286px;top:746px;width:3px;height:16px;background:radial-gradient(circle,#14359a 0.900px,transparent 1.200px);background-size:3px 4px;opacity:.85"></div>
<svg style="left:118px;top:744px" width="18" height="18"><rect x="1.500" y="2.500" width="14" height="14" rx="3" fill="#e9f2fe" stroke="#2f6fd6" stroke-width="1.800"/><rect x="4" y="5.500" width="8" height="8" rx="1" fill="#fff" stroke="#7fa6e8"/><path d="M6 12q3-1 7-7" stroke="#2b52a8" stroke-width="1.800" fill="none"/><path d="M5.500 8h4M5.500 10h3" stroke="#2b52a8"/><circle cx="15.500" cy="5.500" r="1.300" fill="#e35a1c"/></svg><svg style="left:142px;top:746px" width="16" height="16"><rect x="0.5" y="0.5" width="15" height="15" fill="#fdf3dc" stroke="#e79a1c" stroke-width="1.6"/><circle cx="8" cy="8" r="4.300" fill="#fffaf0" stroke="#d88a18" stroke-width="1.200"/><path d="M8 5.500V8.300H10.300" stroke="#b86a10" stroke-width="1" fill="none"/></svg><svg style="left:165px;top:746px" width="16" height="16"><text x="8.500" y="14.500" text-anchor="middle" font-family="Liberation Sans,sans-serif" font-weight="bold" font-size="20" fill="#7ec6fb" stroke="#1858b8" stroke-width=".7" paint-order="stroke">e</text><path d="M1.500 12.500Q-1 9 6 4.500T16 1.500Q17.500 3 14 6.500" fill="none" stroke="#f2b31c" stroke-width="1.500"/></svg><svg style="left:188px;top:745px" width="17" height="17"><rect x="5.500" y="4.500" width="10" height="12" fill="#eef2fb" stroke="#8795c0"/><rect x="0.500" y="1.500" width="11" height="11" fill="#f2dfe6" stroke="#b0627e"/><circle cx="7" cy="6" r="2.600" fill="#a63a62"/><path d="M5.500 7.500L2.500 10.500l1.200 1.200 3.500-3.500z" fill="#a63a62"/></svg><svg style="left:211px;top:746px" width="16" height="16"><path d="M1 3.500h5l1.500 1.500H14.500v9H1z" fill="#e8b93a" stroke="#a87a10"/><path d="M2.500 7H15.500L14 14H1z" fill="#fbe08a" stroke="#b88a18"/></svg><svg style="left:234px;top:746px" width="16" height="16"><rect width="16" height="16" fill="#fff"/><path d="M13 2L4 6l9 2.500" stroke="#111" stroke-width="1.800" fill="none"/><path d="M3 8l9 3.500L3 14" stroke="#d2121a" stroke-width="2" fill="none"/></svg>
<div class="t" style="left:266px;top:738px;color:#d4e2fb;font-size:13px;font-weight:bold">&#187;</div>
<div class="a" style="left:293px;top:741px;width:123px;height:24px;border-radius:3px;background:linear-gradient(#4a8ef0 0,#3c82ee 2px,#3a80ee 20px,#3478e8 24px);box-shadow:inset 1px 1px 0 #5e9af3,1px 0 0 #2458d0,2px 0 0 #2458d0"></div>
<div class="t" style="left:321px;top:747px;color:#fff;letter-spacing:0">Inbox - Micros...</div>
<svg style="left:302px;top:745px" width="16" height="16"><rect x="0.5" y="0.5" width="15" height="15" fill="#fdf3dc" stroke="#e79a1c" stroke-width="1.6"/><circle cx="8" cy="8" r="4.300" fill="#fffaf0" stroke="#d88a18" stroke-width="1.200"/><path d="M8 5.500V8.300H10.300" stroke="#b86a10" stroke-width="1" fill="none"/></svg>
<div class="a" style="left:418px;top:741px;width:123px;height:24px;border-radius:3px;background:linear-gradient(#4a8ef0 0,#3c82ee 2px,#3a80ee 20px,#3478e8 24px);box-shadow:inset 1px 1px 0 #5e9af3,1px 0 0 #2458d0,2px 0 0 #2458d0"></div>
<div class="t" style="left:446px;top:747px;color:#fff;letter-spacing:0">STRATIX Logo...</div>
<svg style="left:427px;top:745px" width="16" height="16"><rect width="16" height="16" fill="#fff"/><path d="M13 2L4 6l9 2.500" stroke="#111" stroke-width="1.800" fill="none"/><path d="M3 8l9 3.500L3 14" stroke="#d2121a" stroke-width="2" fill="none"/></svg>
<div class="a" style="left:543px;top:741px;width:123px;height:24px;border-radius:3px;background:linear-gradient(#4a8ef0 0,#3c82ee 2px,#3a80ee 20px,#3478e8 24px);box-shadow:inset 1px 1px 0 #5e9af3,1px 0 0 #2458d0,2px 0 0 #2458d0"></div>
<div class="t" style="left:571px;top:747px;color:#fff;letter-spacing:0">Help with Rep...</div>
<svg style="left:552px;top:745px" width="16" height="16"><text x="8.500" y="14.500" text-anchor="middle" font-family="Liberation Sans,sans-serif" font-weight="bold" font-size="20" fill="#7ec6fb" stroke="#1858b8" stroke-width=".7" paint-order="stroke">e</text><path d="M1.500 12.500Q-1 9 6 4.500T16 1.500Q17.500 3 14 6.500" fill="none" stroke="#f2b31c" stroke-width="1.500"/></svg>
<div class="a" style="left:668px;top:741px;width:123px;height:24px;border-radius:3px;background:linear-gradient(#4a8ef0 0,#3c82ee 2px,#3a80ee 20px,#3478e8 24px);box-shadow:inset 1px 1px 0 #5e9af3,1px 0 0 #2458d0,2px 0 0 #2458d0"></div>
<div class="t" style="left:696px;top:747px;color:#fff;letter-spacing:0">S:\Quality\Qu...</div>
<svg style="left:677px;top:745px" width="16" height="16"><path d="M1 3.500h5l1.500 1.500H14.500v9H1z" fill="#e8b93a" stroke="#a87a10"/><path d="M2.500 7H15.500L14 14H1z" fill="#fbe08a" stroke="#b88a18"/></svg>
<div class="a" style="left:792px;top:741px;width:126px;height:24px;border-radius:3px;background:linear-gradient(#1a44a8 0,#1e4cb8 4px,#2050bc 18px,#2254c0 24px);box-shadow:inset 1px 1px 0 #153a92,inset -1px -1px 0 #2f66d2"></div>
<svg style="left:803px;top:745px" width="16" height="16"><rect x="0.5" y="0.5" width="15" height="15" fill="#f2dfe6" stroke="#b0627e"/><rect x="2" y="2" width="12" height="12" fill="#d7a3b6"/><circle cx="10" cy="6" r="3" fill="#a63a62"/><path d="M8 8L3.500 12.500l1.500 1.500 5-5z" fill="#a63a62"/></svg>
<div class="t" style="left:822px;top:747px;color:#f5c56a;font-weight:bold">3</div>
<div class="t" style="left:832px;top:747px;color:#fff">Microsoft ...</div>
<div class="arr" style="left:908px;top:753px;border-top-color:#fff"></div>
<div class="a" style="left:931px;top:738px;width:93px;height:30px;background:linear-gradient(#1da0ee 0,#1492e6 4px,#1190e6 20px,#0f84dc 27px,#0c74cc 30px);border-left:1px solid #0b4fae;box-shadow:inset 1px 0 0 #3ab4f6"></div>
<div class="a" style="left:922px;top:745px;width:18px;height:18px;border-radius:50%;background:radial-gradient(circle at 35% 35%,#6bb2fa,#2b76e6 60%,#1c58c8);border:1px solid #cfe2fc"><svg style="left:4px;top:3px" width="8" height="10"><path d="M6 1L2 5l4 4" stroke="#fff" stroke-width="2" fill="none"/></svg></div>
<svg style="left:942px;top:746px" width="16" height="16"><rect x="0.5" y="0.5" width="15" height="15" fill="#fdf3dc" stroke="#e79a1c" stroke-width="1.6"/><circle cx="8" cy="8" r="4.300" fill="#fffaf0" stroke="#d88a18" stroke-width="1.200"/><path d="M8 5.500V8.300H10.300" stroke="#b86a10" stroke-width="1" fill="none"/></svg>
<div class="t" style="left:965px;top:747px;color:#fff">10:10 AM</div>
</body></html>
